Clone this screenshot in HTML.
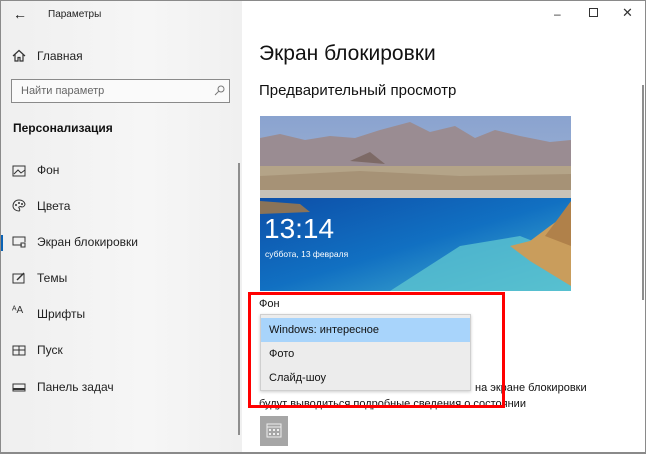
<!DOCTYPE html>
<html><head><meta charset="utf-8"><style>
*{margin:0;padding:0;box-sizing:border-box}
body{width:646px;height:454px;overflow:hidden;background:#fff;font-family:"Liberation Sans","Noto Sans CJK SC",sans-serif;color:#111;position:relative}
.frame{position:absolute;left:0;top:0;width:646px;height:454px;border:1px solid #8a8a8a;border-bottom:2px solid #8a8a8a;z-index:20;pointer-events:none}
.side{position:absolute;left:0;top:0;width:242px;height:454px;background:linear-gradient(90deg,#efefef,#f6f6f6 60%,#f0f0f0)}
.t{position:absolute;white-space:nowrap}
.sb{position:absolute;width:2px;background:#8e8e8e}
.item{position:absolute;left:37px;font-size:12px;color:#222}
.ic{position:absolute;left:12px}
</style></head><body>
<div class="side">
 <div class="t" style="left:13px;top:6px;font-size:14px">←</div>
 <div class="t" style="left:48px;top:9px;font-size:10px;color:#222">Параметры</div>
 <svg class="ic" style="top:49px" width="14" height="13" viewBox="0 0 14 13"><path d="M1 7 L7 1.5 L13 7 M3 5.5 V12 H6 V8.5 H8 V12 H11 V5.5" fill="none" stroke="#333" stroke-width="1.2"/></svg>
 <div class="item" style="top:49px">Главная</div>
 <div style="position:absolute;left:11px;top:79px;width:219px;height:24px;border:1px solid #8a8a8a;background:#fafafa"></div>
 <div class="t" style="left:21px;top:85px;font-size:11px;color:#666">Найти параметр</div>
 <svg style="position:absolute;left:214px;top:85px" width="11" height="11"><circle cx="7" cy="4" r="3" fill="none" stroke="#777"/><path d="M5 6 L1 10" stroke="#777"/></svg>
 <div class="t" style="left:13px;top:121px;font-size:12px;font-weight:bold">Персонализация</div>
 <svg class="ic" style="top:165px" width="14" height="12"><rect x="1" y="1" width="12" height="10" fill="none" stroke="#333"/><path d="M2 9 L6 5 L9 8 L13 5" fill="none" stroke="#333"/></svg>
 <div class="item" style="top:163px">Фон</div>
 <svg class="ic" style="top:199px" width="14" height="13"><path d="M7 1 C3 1 1 4 1 7 C1 10 4 12 7 12 C8 12 8 10 7 9 C6 8 8 7 10 8 C12 8 13 6 13 5 C12 2 10 1 7 1Z" fill="none" stroke="#333"/><circle cx="4" cy="6" r="1" fill="#333"/><circle cx="7" cy="4" r="1" fill="#333"/><circle cx="10" cy="5" r="1" fill="#333"/></svg>
 <div class="item" style="top:199px">Цвета</div>
 <div style="position:absolute;left:0;top:235px;width:3px;height:16px;background:#0a62b5"></div>
 <svg class="ic" style="top:236px" width="14" height="12"><path d="M10 9 H1 V1 H13 V6" fill="none" stroke="#333"/><rect x="9" y="7" width="4" height="4" fill="none" stroke="#333"/></svg>
 <div class="item" style="top:235px">Экран блокировки</div>
 <svg class="ic" style="top:272px" width="14" height="12"><rect x="1" y="2" width="11" height="9" fill="none" stroke="#333"/><path d="M5 8 L12 1" stroke="#333" stroke-width="1.4"/></svg>
 <div class="item" style="top:271px">Темы</div>
 <div class="t" style="left:12px;top:305px;font-size:10px;color:#333">ᴬA</div>
 <div class="item" style="top:307px">Шрифты</div>
 <svg class="ic" style="top:345px" width="14" height="11"><rect x="1" y="1" width="12" height="9" fill="none" stroke="#333"/><path d="M1 5 H13 M7 1 V10" stroke="#333"/></svg>
 <div class="item" style="top:343px">Пуск</div>
 <svg class="ic" style="top:383px" width="14" height="9"><rect x="1" y="1" width="12" height="7" fill="none" stroke="#333"/><path d="M1 6 H13" stroke="#333" stroke-width="2"/></svg>
 <div class="item" style="top:380px">Панель задач</div>
 <div class="sb" style="left:238px;top:163px;height:272px"></div>
</div>
<div class="t" style="left:554px;top:7px;font-size:12px;color:#333">–</div>
<div style="position:absolute;left:589px;top:8px;width:9px;height:9px;border:1px solid #333"></div>
<div class="t" style="left:622px;top:5px;font-size:13px;color:#333">✕</div>
<div class="sb" style="left:642px;top:85px;height:215px"></div>
<div class="t" style="left:259px;top:42px;font-size:21px;color:#111">Экран блокировки</div>
<div class="t" style="left:259px;top:82px;font-size:15px;color:#111">Предварительный просмотр</div>
<svg style="position:absolute;left:260px;top:116px" width="311" height="175" viewBox="0 0 311 175">
 <defs>
  <linearGradient id="sky" x1="0" y1="0" x2="0" y2="1"><stop offset="0" stop-color="#8aa3cf"/><stop offset="1" stop-color="#b9c6dc"/></linearGradient>
  <linearGradient id="sea" x1="0" y1="0" x2="1" y2="1"><stop offset="0" stop-color="#0d4fa8"/><stop offset=".5" stop-color="#1170c2"/><stop offset="1" stop-color="#4ab6d0"/></linearGradient>
 </defs>
 <rect width="311" height="175" fill="url(#sky)"/>
 <path d="M0 22 L20 18 L45 24 L70 20 L95 22 L120 14 L150 6 L170 16 L195 10 L215 22 L235 14 L260 20 L290 26 L311 24 V60 H0Z" fill="#9a8c92"/>
 <path d="M90 45 L110 36 L125 48Z" fill="#7d6a66"/>
 <path d="M0 50 H311 V78 H0Z" fill="#b4a488"/>
 <path d="M0 60 L100 55 L200 60 L311 58 V78 H0Z" fill="#a69276"/>
 <rect y="74" width="311" height="8" fill="#c8c2b8"/>
 <rect y="82" width="311" height="93" fill="url(#sea)"/>
 <path d="M0 85 L40 88 L50 96 L0 98Z" fill="#8a7358"/>
 <path d="M130 175 L200 130 L260 120 L311 140 V175Z" fill="#5bc3cf" opacity=".8"/>
 <path d="M311 95 L290 110 L270 125 L250 130 L270 145 L311 170Z" fill="#c99d5c"/>
 <path d="M311 85 L300 100 L285 120 L311 130Z" fill="#b0814a"/>
 <text x="4" y="122" font-family="Liberation Sans,sans-serif" font-size="28" fill="#fff">13:14</text>
 <text x="5" y="141" font-family="Liberation Sans,sans-serif" font-size="8.5" fill="#fff">суббота, 13 февраля</text>
</svg>
<div class="t" style="left:259px;top:298px;font-size:11px">Фон</div>
<div style="position:absolute;left:260px;top:314px;width:211px;height:77px;background:#ececec;border:1px solid #cfcfcf;box-shadow:0 1px 3px rgba(0,0,0,.2)"></div>
<div style="position:absolute;left:261px;top:318px;width:209px;height:24px;background:#a8d4fb"></div>
<div class="t" style="left:269px;top:324px;font-size:11px">Windows: интересное</div>
<div class="t" style="left:269px;top:348px;font-size:11px">Фото</div>
<div class="t" style="left:269px;top:372px;font-size:11px">Слайд-шоу</div>
<div class="t" style="left:475px;top:382px;font-size:11px">на экране блокировки</div>
<div class="t" style="left:259px;top:398px;font-size:11px">будут выводиться подробные сведения о состоянии</div>
<div style="position:absolute;left:248px;top:292px;width:257px;height:116px;border:3px solid #f00"></div>
<div style="position:absolute;left:260px;top:416px;width:28px;height:30px;background:#a6a6a6"></div>
<svg style="position:absolute;left:266px;top:423px" width="16" height="15"><rect x="1" y="1" width="14" height="13" fill="none" stroke="#eee"/><path d="M1 4 H15" stroke="#eee"/><g fill="#eee"><rect x="3" y="6" width="2" height="2"/><rect x="7" y="6" width="2" height="2"/><rect x="11" y="6" width="2" height="2"/><rect x="3" y="10" width="2" height="2"/><rect x="7" y="10" width="2" height="2"/><rect x="11" y="10" width="2" height="2"/></g></svg>
<div class="frame"></div>
</body></html>
